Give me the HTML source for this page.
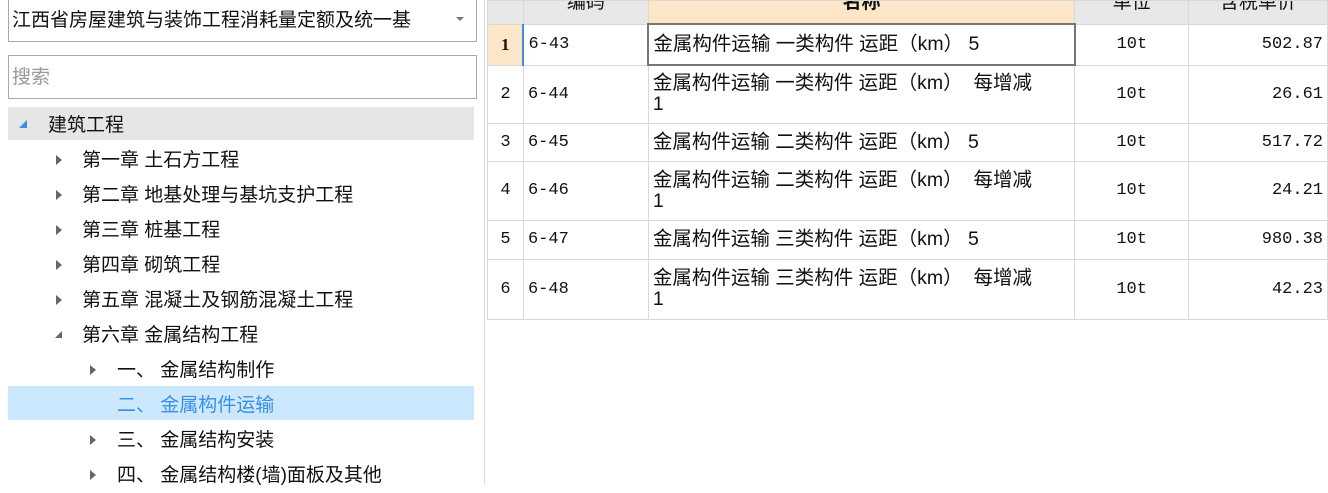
<!DOCTYPE html><html><head><meta charset="utf-8"><style>
body{margin:0;width:1328px;height:485px;background:#fff;position:relative;overflow:hidden;font-family:"Liberation Sans","Noto Sans CJK SC",sans-serif;color:#111}
.a{position:absolute;white-space:nowrap}
.t{font-size:19px;line-height:34px;height:34px}
.tri{position:absolute;width:0;height:0;border-top:5px solid transparent;border-bottom:5px solid transparent;border-left:6px solid #666}
.tbl{position:absolute;left:487px;top:0;border-collapse:collapse;font-size:17px;font-family:"Liberation Mono","Noto Sans CJK SC",monospace}
.tbl td{border:1px solid #d8d8d8;padding:0 4px;vertical-align:middle}
.tbl .n{font-family:"Liberation Sans","Noto Sans CJK SC",sans-serif;line-height:21px;font-size:19.5px}
.tbl tr.hd td{height:22px;line-height:18px;font-size:19px;font-family:"Liberation Sans","Noto Sans CJK SC",sans-serif;padding:0;overflow:hidden}
.h{position:relative;top:-9px;display:inline-block;height:18px}
</style></head><body>
<div class="a" style="left:8px;top:-2px;width:464px;height:42px;border:1px solid #aaa;font-size:19px;line-height:44px;padding-left:3px;overflow:hidden">江西省房屋建筑与装饰工程消耗量定额及统一基</div>
<div class="a" style="left:456px;top:17px;border-left:4px solid transparent;border-right:4px solid transparent;border-top:4px solid #777"></div>
<div class="a" style="left:8px;top:55px;width:464px;height:42px;border:1px solid #aaa;font-size:19px;line-height:44px;padding-left:3px;color:#999">搜索</div>
<div class="a" style="left:484px;top:0;width:1px;height:485px;background:#ddd"></div>
<div class="a" style="left:8px;top:107px;width:466px;height:33px;background:#e6e6e6"></div>
<div class="a" style="left:19px;top:120px;width:0;height:0;border-left:8px solid transparent;border-bottom:8px solid #3a8ee6"></div>
<div class="a t" style="left:48px;top:109px">建筑工程</div>
<div class="a" style="left:8px;top:386px;width:466px;height:34px;background:#cce8ff"></div>
<div class="tri" style="left:56px;top:155px"></div><div class="a t" style="left:82px;top:144px">第一章 土石方工程</div>
<div class="tri" style="left:56px;top:190px"></div><div class="a t" style="left:82px;top:179px">第二章 地基处理与基坑支护工程</div>
<div class="tri" style="left:56px;top:225px"></div><div class="a t" style="left:82px;top:214px">第三章 桩基工程</div>
<div class="tri" style="left:56px;top:260px"></div><div class="a t" style="left:82px;top:249px">第四章 砌筑工程</div>
<div class="tri" style="left:56px;top:295px"></div><div class="a t" style="left:82px;top:284px">第五章 混凝土及钢筋混凝土工程</div>
<div class="a" style="left:55px;top:331px;width:0;height:0;border-left:7px solid transparent;border-bottom:7px solid #666"></div><div class="a t" style="left:82px;top:319px">第六章 金属结构工程</div>
<div class="tri" style="left:90px;top:365px"></div><div class="a t" style="left:117px;top:354px">一、 金属结构制作</div>
<div class="a t" style="left:117px;top:389px;color:#3a8ee6">二、 金属构件运输</div>
<div class="tri" style="left:90px;top:435px"></div><div class="a t" style="left:117px;top:424px">三、 金属结构安装</div>
<div class="tri" style="left:90px;top:470px"></div><div class="a t" style="left:117px;top:459px">四、 金属结构楼(墙)面板及其他</div>
<table class="tbl">
<colgroup><col style="width:36px"><col style="width:125px"><col style="width:427px"><col style="width:114px"><col style="width:139px"></colgroup>
<tr class="hd" style="background:#e8e8e8"><td></td><td style="text-align:center"><span class="h">编码</span></td><td style="background:#fde6c8;text-align:center;font-weight:bold"><span class="h">名称</span></td><td style="text-align:center"><span class="h">单位</span></td><td style="text-align:center"><span class="h">含税单价</span></td></tr>
<tr style="height:41px"><td style="background:#fde6c8;text-align:center;font-weight:bold;font-family:'Liberation Serif',serif">1</td><td style="border-left:2px solid #3a8ee6">6-43</td><td class="n" style="border:2px solid #777">金属构件运输 一类构件 运距（km） 5</td><td style="text-align:center">10t</td><td style="text-align:right">502.87</td></tr>
<tr style="height:58px"><td style="text-align:center">2</td><td>6-44</td><td class="n">金属构件运输 一类构件 运距（km） &nbsp;每增减<br>1</td><td style="text-align:center">10t</td><td style="text-align:right">26.61</td></tr>
<tr style="height:38px"><td style="text-align:center">3</td><td>6-45</td><td class="n">金属构件运输 二类构件 运距（km） 5</td><td style="text-align:center">10t</td><td style="text-align:right">517.72</td></tr>
<tr style="height:59px"><td style="text-align:center">4</td><td>6-46</td><td class="n">金属构件运输 二类构件 运距（km） &nbsp;每增减<br>1</td><td style="text-align:center">10t</td><td style="text-align:right">24.21</td></tr>
<tr style="height:39px"><td style="text-align:center">5</td><td>6-47</td><td class="n">金属构件运输 三类构件 运距（km） 5</td><td style="text-align:center">10t</td><td style="text-align:right">980.38</td></tr>
<tr style="height:60px"><td style="text-align:center">6</td><td>6-48</td><td class="n">金属构件运输 三类构件 运距（km） &nbsp;每增减<br>1</td><td style="text-align:center">10t</td><td style="text-align:right">42.23</td></tr>
</table>
</body></html>
